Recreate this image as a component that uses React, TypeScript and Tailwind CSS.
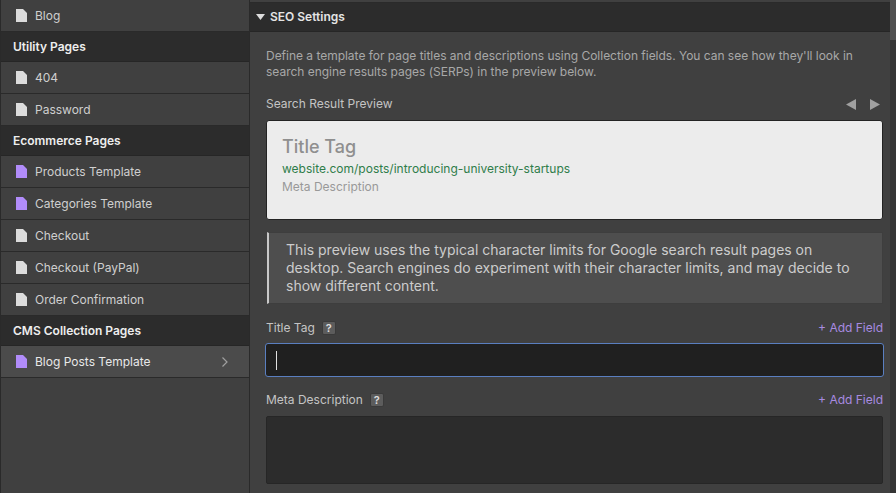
const font = { fontFamily: "Inter, sans-serif" };

function PageIcon({ purple }: { purple?: boolean }) {
  return (
    <svg width="11" height="13" viewBox="0 0 11 13" className="shrink-0">
      <path d="M0 0H7L11 4V13H0Z" fill={purple ? "#b18cfa" : "#dcdcdc"} />
    </svg>
  );
}

function Row({ label, purple, active }: { label: string; purple?: boolean; active?: boolean }) {
  return (
    <div className={`flex h-8 items-center border-b border-[#2a2a2a] pl-[15px] pr-5 ${active ? "bg-[#4b4b4b]" : "bg-[#404040]"}`}>
      <PageIcon purple={purple} />
      <span className={`ml-2 pt-px text-[12px] ${active ? "text-[#e8e8e8]" : "text-[#cfcfcf]"}`}>{label}</span>
      {active && (
        <svg width="8" height="12" viewBox="0 0 8 12" className="ml-auto" fill="none" stroke="#a0a0a0" strokeWidth="1.2">
          <path d="M1.5 1.5L6 6L1.5 10.5" />
        </svg>
      )}
    </div>
  );
}

function Header({ label }: { label: string }) {
  return (
    <div className="flex h-[30px] items-center border-b border-[#262626] bg-[#2c2c2c] pl-[12px] pt-px text-[12px] font-semibold text-[#eeeeee]">
      {label}
    </div>
  );
}

function Help() {
  return (
    <span className="ml-[7px] flex h-[14px] w-[14px] shrink-0 items-center justify-center rounded-[2px] border border-[#3a3a3a] bg-[#5c5c5c] text-[11px] font-semibold text-[#dddddd]">
      ?
    </span>
  );
}

function FieldLabel({ label }: { label: string }) {
  return (
    <div className="flex h-4 items-center justify-between">
      <div className="flex items-center">
        <span className="text-[12px] text-[#c4c4c4]">{label}</span>
        <Help />
      </div>
      <span className="text-[12px] text-[#a88be0]">+ Add Field</span>
    </div>
  );
}

export default function App() {
  return (
    <div style={font} className="flex h-[493px] w-[896px] overflow-hidden bg-[#404040]">
      <aside className="h-full w-[250px] shrink-0 border-x border-[#2a2a2a] bg-[#404040]">
        <Row label="Blog" />
        <Header label="Utility Pages" />
        <Row label="404" />
        <Row label="Password" />
        <Header label="Ecommerce Pages" />
        <Row label="Products Template" purple />
        <Row label="Categories Template" purple />
        <Row label="Checkout" />
        <Row label="Checkout (PayPal)" />
        <Row label="Order Confirmation" />
        <Header label="CMS Collection Pages" />
        <Row label="Blog Posts Template" purple active />
      </aside>
      <main className="h-full w-[640px] shrink-0 overflow-hidden">
        <div className="h-[3px] border-b border-[#2a2a2a] bg-[#404040]" />
        <div className="flex h-[29px] items-center border-b border-[#262626] bg-[#2c2c2c] pl-[6px] text-[12px] font-semibold text-[#e4e4e4]">
          <svg width="9" height="6" viewBox="0 0 9 6" className="mr-[5px]">
            <path d="M0 0H9L4.5 6Z" fill="#dddddd" />
          </svg>
          SEO Settings
        </div>
        <div className="pl-4 pr-[7px] pt-[16px]">
          <p className="text-[12px] leading-[16px] tracking-[-0.02px] text-[#a8a8a8]">
            Define a template for page titles and descriptions using Collection fields. You can see how they'll look in search engine results pages (SERPs) in the preview below.
          </p>
          <div className="mt-[16px] flex h-4 items-center justify-between pr-[3px]">
            <span className="text-[12px] text-[#c4c4c4]">Search Result Preview</span>
            <div className="flex items-center gap-[14px]">
              <svg width="10" height="11" viewBox="0 0 10 11"><path d="M10 0V11L0 5.5Z" fill="#a0a0a0" /></svg>
              <svg width="10" height="11" viewBox="0 0 10 11"><path d="M0 0V11L10 5.5Z" fill="#a0a0a0" /></svg>
            </div>
          </div>
          <div className="mt-[8px] h-[100px] rounded-[3px] border border-[#232323] bg-[#ececec] pl-[15px] pt-[15px]">
            <div className="text-[18px] font-medium leading-[22px] text-[#8f8f8f]">Title Tag</div>
            <div className="mt-[2px] text-[12px] leading-[18px] text-[#2f7d4a]">website.com/posts/introducing-university-startups</div>
            <div className="text-[12px] leading-[18px] text-[#999999]">Meta Description</div>
          </div>
          <div className="ml-px mt-[12px] h-[72px] border border-l-2 border-[#3e3e3e] border-l-[#c8c8c8] bg-[#4e4e4e] pl-[17px] pr-4 pt-[8px] text-[14px] leading-[18px] text-[#cccccc]">
            This preview uses the typical character limits for Google search result pages on desktop. Search engines do experiment with their character limits, and may decide to show different content.
          </div>
          <div className="mt-[16px]"><FieldLabel label="Title Tag" /></div>
          <div className="-mx-px mt-[7px] flex h-[34px] items-center rounded-[3px] border border-[#5a7fc0] bg-[#202020] pl-[10px]">
            <div className="h-[19px] w-px bg-[#e0e0e0]" />
          </div>
          <div className="mt-[15px]"><FieldLabel label="Meta Description" /></div>
          <div className="mt-[8px] h-[68px] rounded-[2px] border border-[#262626] bg-[#2c2c2c]" />
        </div>
      </main>
      <div className="h-full w-[6px] shrink-0 bg-[#353535]">
        <div className="h-[40px] bg-[#505050]" />
      </div>
    </div>
  );
}
